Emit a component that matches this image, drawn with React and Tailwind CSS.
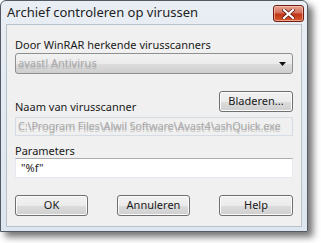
import React from 'react';

const font = { fontFamily: '"Noto Sans", "Open Sans", sans-serif' };

const Button = ({ children, className = '' }) => (
  <div
    className={`flex h-[21px] items-center justify-center rounded-[3px] border border-[#707070] bg-[linear-gradient(#f2f2f2_0%,#ebebeb_50%,#dddddd_51%,#cfcfcf_100%)] text-[11px] text-[#1a1a1a] shadow-[inset_0_0_0_1px_#fbfbfb] ${className}`}
  >
    {children}
  </div>
);

const App = () => {
  return (
    <div className="h-[243px] w-[321px] overflow-hidden bg-white" style={font}>
      <div className="flex h-[232px] w-[308px] flex-col rounded-t-[6px] border border-[#545a63] bg-[linear-gradient(#e9eef4,#dde5ee)] shadow-[5px_5px_7px_rgba(0,0,0,0.55)]">
        {/* title bar */}
        <div className="flex h-[23px] items-center justify-between pl-[6px] pr-[3px]">
          <span className="text-[13px] text-[#1e1e1e]">Archief controleren op virussen</span>
          <div className="mt-[2px] flex h-[17px] w-[31px] items-center justify-center rounded-[3px] border border-[#6d1d12] bg-[linear-gradient(#e8a493_0%,#d4715c_45%,#c23417_55%,#d65a2e_100%)] shadow-[inset_0_0_0_1px_rgba(255,210,190,0.6)]">
            <svg width="13" height="10" viewBox="0 0 13 10">
              <path d="M2 1 L11 9 M11 1 L2 9" stroke="#5a1a10" strokeWidth="3.6" strokeLinecap="square" />
              <path d="M2 1 L11 9 M11 1 L2 9" stroke="#ffffff" strokeWidth="2.2" strokeLinecap="square" />
            </svg>
          </div>
        </div>

        {/* client area */}
        <div className="mx-[5px] mb-[4px] flex flex-1 flex-col border border-[#b9c1ca] bg-[#f0f0f0] px-[8px] text-[11px] text-[#1a1a1a]">
          <div className="mt-[13px] leading-[14px]">Door WinRAR herkende virusscanners</div>
          <div className="mt-[1px] flex h-[21px] items-center justify-between rounded-[3px] border border-[#8e8f8f] bg-[linear-gradient(#f2f2f2_0%,#ebebeb_50%,#dddddd_51%,#cfcfcf_100%)] pl-[2px] pr-[6px]">
            <span className="text-[#ababab] [text-shadow:0_2px_0_rgba(160,160,160,0.5)]">avast! Antivirus</span>
            <svg width="7" height="4" viewBox="0 0 7 4">
              <path d="M0 0 H7 L3.5 4 Z" fill="#111" />
            </svg>
          </div>

          <div className="mt-[17px] flex items-end justify-between">
            <span className="mb-[-2px] leading-[14px]">Naam van virusscanner</span>
            <Button className="w-[74px]">Bladeren...</Button>
          </div>
          <div className="mt-[5px] flex h-[19px] items-center overflow-hidden border border-[#d5dce3] bg-[#f0f0f0] pl-[2px]">
            <span className="whitespace-nowrap tracking-[-0.2px] text-[#ababab] [text-shadow:0_2px_0_rgba(160,160,160,0.5)]">
              C:\Program Files\Alwil Software\Avast4\ashQuick.exe
            </span>
          </div>

          <div className="mt-[8px] leading-[14px]">Parameters</div>
          <div className="flex h-[20px] items-center border border-[#e3e9ef] border-t-[#abadb3] bg-white pl-[5px]">
            <span>"%f"</span>
          </div>

          <div className="mt-[17px] flex justify-between">
            <Button className="w-[73px]">OK</Button>
            <Button className="w-[73px]">Annuleren</Button>
            <Button className="w-[74px]">Help</Button>
          </div>
        </div>
      </div>
    </div>
  );
};

export default App;
